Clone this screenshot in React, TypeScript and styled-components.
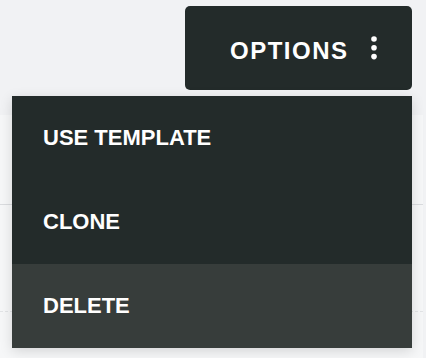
import React from "react";
import styled, { createGlobalStyle } from "styled-components";

const Global = createGlobalStyle`
  html, body {
    margin: 0;
    padding: 0;
    background: #f1f2f4;
    font-family: "Liberation Sans", Arial, sans-serif;
  }
  * { box-sizing: border-box; }
`;

const Page = styled.div`
  position: relative;
  width: 426px;
  height: 358px;
  overflow: hidden;
`;

const Header = styled.div`
  display: flex;
  justify-content: flex-end;
  padding: 6px 14px 0 0;
  position: relative;
  z-index: 2;
`;

const Dropdown = styled.div`
  position: relative;
`;

const OptionsButton = styled.button`
  display: flex;
  align-items: center;
  width: 227px;
  height: 84px;
  padding: 0 35px 0 45px;
  border: none;
  border-radius: 5px;
  background: #232b2a;
  color: #ffffff;
  font-family: "Liberation Sans", Arial, sans-serif;
  font-weight: 700;
  font-size: 24px;
  letter-spacing: 1.5px;
  cursor: pointer;
`;

const ButtonLabel = styled.span`
  padding-top: 5px;
  margin-right: 22px;
`;

const Menu = styled.ul`
  position: absolute;
  top: 90px;
  right: 0;
  width: 400px;
  margin: 0;
  padding: 0;
  list-style: none;
  background: #232b2a;
  box-shadow: 0 3px 12px rgba(0, 0, 0, 0.14);
`;

const MenuItem = styled.li<{ $active?: boolean }>`
  display: flex;
  align-items: center;
  height: 84px;
  padding: 0 0 0 31px;
  background: ${(p) => (p.$active ? "#373d3b" : "transparent")};
  color: #ffffff;
  font-weight: 700;
  font-size: 22px;
  cursor: pointer;
`;

const Table = styled.div`
  margin-top: 25px;
  margin-right: 3px;
  background: #f6f7f8;
  height: 300px;
`;

const Row = styled.div<{ $h: number; $dashed?: boolean }>`
  height: ${(p) => p.$h}px;
  border-bottom: 1px ${(p) => (p.$dashed ? "dashed #e2e4e6" : "solid #dadcdf")};
`;

const Dots = () => (
  <svg width="6" height="24" viewBox="0 0 6 24" aria-hidden="true">
    <circle cx="3" cy="3" r="2.8" fill="#fff" />
    <circle cx="3" cy="11.8" r="2.8" fill="#fff" />
    <circle cx="3" cy="20.6" r="2.8" fill="#fff" />
  </svg>
);

export default function App() {
  return (
    <Page>
      <Global />
      <Header>
        <Dropdown>
          <OptionsButton>
            <ButtonLabel>OPTIONS</ButtonLabel>
            <Dots />
          </OptionsButton>
          <Menu>
            <MenuItem>USE TEMPLATE</MenuItem>
            <MenuItem>CLONE</MenuItem>
            <MenuItem $active>DELETE</MenuItem>
          </Menu>
        </Dropdown>
      </Header>
      <Table>
        <Row $h={90} />
        <Row $h={107} $dashed />
      </Table>
    </Page>
  );
}
